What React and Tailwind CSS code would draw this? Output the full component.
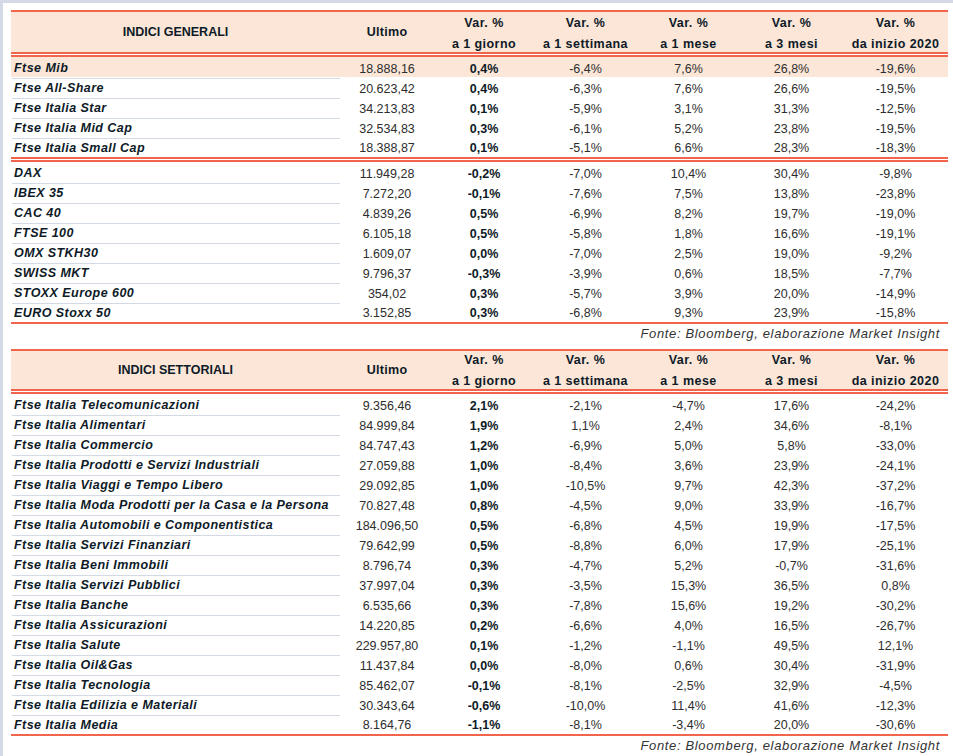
import React from "react";

const RED = "bg-[#f0654c]";

const t1g1 = [
  ["Ftse Mib", "18.888,16", "0,4%", "-6,4%", "7,6%", "26,8%", "-19,6%"],
  ["Ftse All-Share", "20.623,42", "0,4%", "-6,3%", "7,6%", "26,6%", "-19,5%"],
  ["Ftse Italia Star", "34.213,83", "0,1%", "-5,9%", "3,1%", "31,3%", "-12,5%"],
  ["Ftse Italia Mid Cap", "32.534,83", "0,3%", "-6,1%", "5,2%", "23,8%", "-19,5%"],
  ["Ftse Italia Small Cap", "18.388,87", "0,1%", "-5,1%", "6,6%", "28,3%", "-18,3%"],
];

const t1g2 = [
  ["DAX", "11.949,28", "-0,2%", "-7,0%", "10,4%", "30,4%", "-9,8%"],
  ["IBEX 35", "7.272,20", "-0,1%", "-7,6%", "7,5%", "13,8%", "-23,8%"],
  ["CAC 40", "4.839,26", "0,5%", "-6,9%", "8,2%", "19,7%", "-19,0%"],
  ["FTSE 100", "6.105,18", "0,5%", "-5,8%", "1,8%", "16,6%", "-19,1%"],
  ["OMX STKH30", "1.609,07", "0,0%", "-7,0%", "2,5%", "19,0%", "-9,2%"],
  ["SWISS MKT", "9.796,37", "-0,3%", "-3,9%", "0,6%", "18,5%", "-7,7%"],
  ["STOXX Europe 600", "354,02", "0,3%", "-5,7%", "3,9%", "20,0%", "-14,9%"],
  ["EURO Stoxx 50", "3.152,85", "0,3%", "-6,8%", "9,3%", "23,9%", "-15,8%"],
];

const t2 = [
  ["Ftse Italia Telecomunicazioni", "9.356,46", "2,1%", "-2,1%", "-4,7%", "17,6%", "-24,2%"],
  ["Ftse Italia Alimentari", "84.999,84", "1,9%", "1,1%", "2,4%", "34,6%", "-8,1%"],
  ["Ftse Italia Commercio", "84.747,43", "1,2%", "-6,9%", "5,0%", "5,8%", "-33,0%"],
  ["Ftse Italia Prodotti e Servizi Industriali", "27.059,88", "1,0%", "-8,4%", "3,6%", "23,9%", "-24,1%"],
  ["Ftse Italia Viaggi e Tempo Libero", "29.092,85", "1,0%", "-10,5%", "9,7%", "42,3%", "-37,2%"],
  ["Ftse Italia Moda Prodotti per la Casa e la Persona", "70.827,48", "0,8%", "-4,5%", "9,0%", "33,9%", "-16,7%"],
  ["Ftse Italia Automobili e Componentistica", "184.096,50", "0,5%", "-6,8%", "4,5%", "19,9%", "-17,5%"],
  ["Ftse Italia Servizi Finanziari", "79.642,99", "0,5%", "-8,8%", "6,0%", "17,9%", "-25,1%"],
  ["Ftse Italia Beni Immobili", "8.796,74", "0,3%", "-4,7%", "5,2%", "-0,7%", "-31,6%"],
  ["Ftse Italia Servizi Pubblici", "37.997,04", "0,3%", "-3,5%", "15,3%", "36,5%", "0,8%"],
  ["Ftse Italia Banche", "6.535,66", "0,3%", "-7,8%", "15,6%", "19,2%", "-30,2%"],
  ["Ftse Italia Assicurazioni", "14.220,85", "0,2%", "-6,6%", "4,0%", "16,5%", "-26,7%"],
  ["Ftse Italia Salute", "229.957,80", "0,1%", "-1,2%", "-1,1%", "49,5%", "12,1%"],
  ["Ftse Italia Oil&Gas", "11.437,84", "0,0%", "-8,0%", "0,6%", "30,4%", "-31,9%"],
  ["Ftse Italia Tecnologia", "85.462,07", "-0,1%", "-8,1%", "-2,5%", "32,9%", "-4,5%"],
  ["Ftse Italia Edilizia e Materiali", "30.343,64", "-0,6%", "-10,0%", "11,4%", "41,6%", "-12,3%"],
  ["Ftse Italia Media", "8.164,76", "-1,1%", "-8,1%", "-3,4%", "20,0%", "-30,6%"],
];

const GRID = "grid grid-cols-[329px_94px_100px_103px_103px_103px_105px]";

function DoubleRule() {
  return (
    <div className="flex flex-col">
      <div className={`h-[2px] ${RED}`} />
      <div className="h-[1px] bg-white" />
      <div className={`h-[2px] ${RED}`} />
    </div>
  );
}

function Header({ title, h }) {
  const two = [
    ["Var. %", "a 1 giorno"],
    ["Var. %", "a 1 settimana"],
    ["Var. %", "a 1 mese"],
    ["Var. %", "a 3 mesi"],
    ["Var. %", "da inizio 2020"],
  ];
  return (
    <div className={`${GRID} ${h} bg-[#fbe6d8] font-bold text-[12.5px] text-[#0e1a27]`}>
      <div className="flex items-center justify-center">{title}</div>
      <div className="flex items-center justify-center tracking-[0.3px]">Ultimo</div>
      {two.map(([a, b], i) => (
        <div key={i} className="flex flex-col items-center justify-end gap-[5px] tracking-[0.45px]">
          <div className="h-4 leading-4 whitespace-nowrap">{a}</div>
          <div className="h-4 leading-4 whitespace-nowrap">{b}</div>
        </div>
      ))}
    </div>
  );
}

function Row({ r, last, hl }) {
  return (
    <div className={`${GRID} h-5 ${hl ? "bg-[#fbe6d8]" : ""}`}>
      <div className="flex items-stretch pl-[1px]">
        <div
          className={`flex-1 flex items-center pt-[2px] pl-[2px] font-bold italic text-[12.5px] tracking-[0.45px] text-[#0e1a27] whitespace-nowrap ${
            last ? "" : "border-b border-[#d3dae6]"
          }`}
        >
          {r[0]}
        </div>
      </div>
      {r.slice(1).map((v, i) => (
        <div
          key={i}
          className={`flex items-center justify-center pt-[2px] text-[12.5px] whitespace-nowrap ${
            i === 1 ? "font-bold text-[#0e1a27]" : "text-[#2e2e2e]"
          }`}
        >
          {v}
        </div>
      ))}
    </div>
  );
}

function Source({ cls }) {
  return (
    <div className={`flex justify-end pr-[8px] italic text-[13px] tracking-[0.65px] text-[#333] ${cls}`}>
      Fonte: Bloomberg, elaborazione Market Insight
    </div>
  );
}

export default function App() {
  return (
    <div className="w-[953px] h-[756px] bg-white border-t-[3px] border-l-[3px] border-[#d5dbe6] overflow-hidden font-['Liberation_Sans',Arial,sans-serif]">
      <div className="pl-[8px] pt-[7px] w-[945px]">
        {/* Table 1 */}
        <div className="w-[937px]">
          <div className={`h-[2px] ${RED}`} />
          <Header title="INDICI GENERALI" h="h-[40px]" />
          <DoubleRule />
          {t1g1.map((r, i) => (
            <Row key={r[0]} r={r} hl={i === 0} last={i === t1g1.length - 1} />
          ))}
          <DoubleRule />
          {t1g2.map((r, i) => (
            <Row key={r[0]} r={r} last={i === t1g2.length - 1} />
          ))}
          <div className={`h-[2px] ${RED}`} />
        </div>
        <Source cls="h-[25px] leading-[18px] pt-[1px] w-[937px]" />

        {/* Table 2 */}
        <div className="w-[937px]">
          <div className={`h-[2px] ${RED}`} />
          <Header title="INDICI SETTORIALI" h="h-[38px]" />
          <DoubleRule />
          {t2.map((r, i) => (
            <Row key={r[0]} r={r} last={i === t2.length - 1} />
          ))}
          <div className={`h-[2px] ${RED}`} />
        </div>
        <Source cls="leading-[18px] pt-[1px] w-[937px]" />
      </div>
    </div>
  );
}
